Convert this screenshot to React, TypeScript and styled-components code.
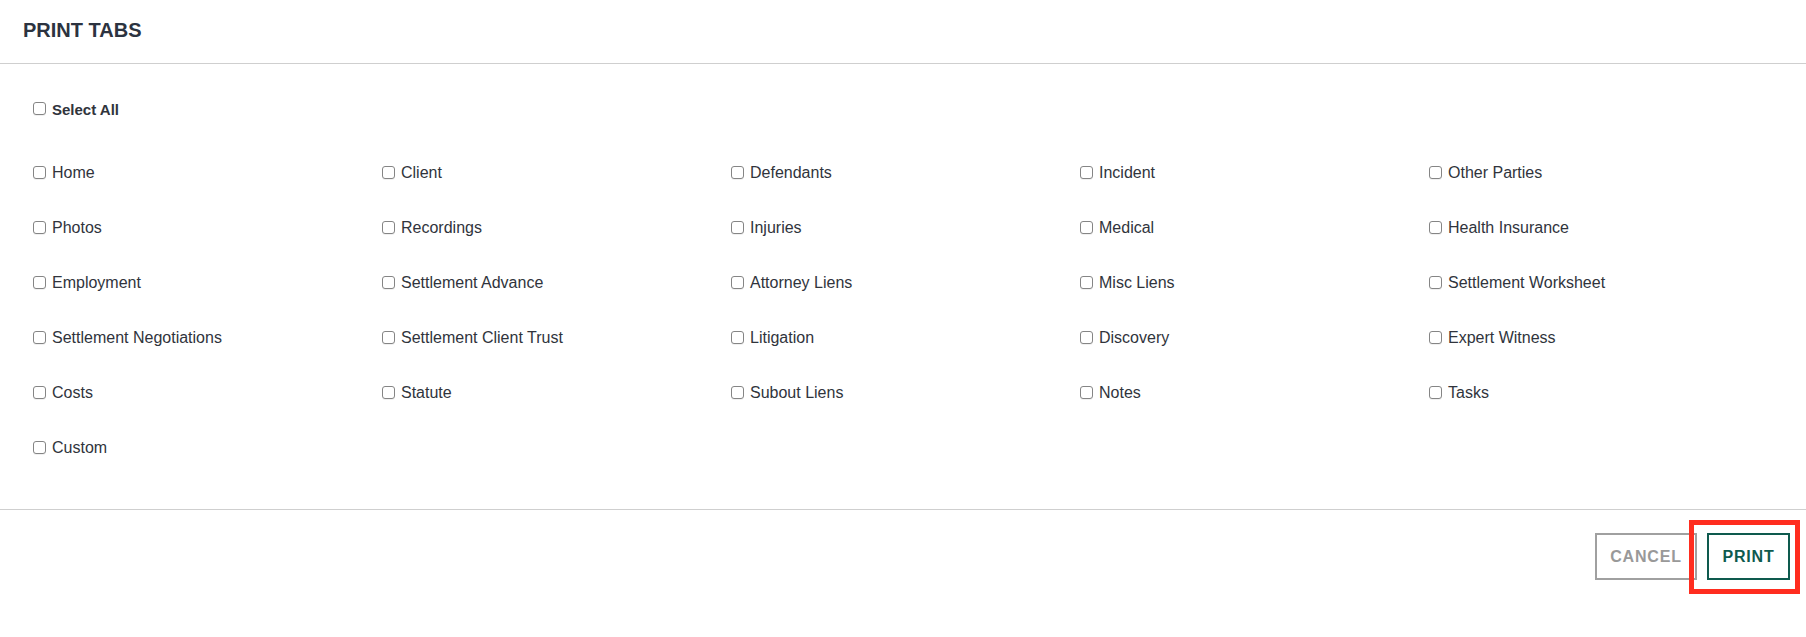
import * as React from 'react';

import styled, { createGlobalStyle } from 'styled-components';

const tabs = [
  'Home', 'Client', 'Defendants', 'Incident', 'Other Parties',
  'Photos', 'Recordings', 'Injuries', 'Medical', 'Health Insurance',
  'Employment', 'Settlement Advance', 'Attorney Liens', 'Misc Liens', 'Settlement Worksheet',
  'Settlement Negotiations', 'Settlement Client Trust', 'Litigation', 'Discovery', 'Expert Witness',
  'Costs', 'Statute', 'Subout Liens', 'Notes', 'Tasks',
  'Custom',
];

const App = (): JSX.Element => {
  const [checked, setChecked] = React.useState<Record<string, boolean>>({});
  const allChecked = tabs.every((t) => checked[t]);

  const toggleAll = () => {
    const next: Record<string, boolean> = {};
    tabs.forEach((t) => (next[t] = !allChecked));
    setChecked(next);
  };

  return (
    <>
      <GlobalStyle />
      <Modal>
        <Header>
          <Title>PRINT TABS</Title>
        </Header>
        <Body>
          <SelectAllRow>
            <Option $bold>
              <Box type="checkbox" checked={allChecked} onChange={toggleAll} />
              Select All
            </Option>
          </SelectAllRow>
          <Grid>
            {tabs.map((tab) => (
              <Option key={tab}>
                <Box
                  type="checkbox"
                  checked={!!checked[tab]}
                  onChange={() => setChecked({ ...checked, [tab]: !checked[tab] })}
                />
                {tab}
              </Option>
            ))}
          </Grid>
        </Body>
        <Footer>
          <Button $variant="cancel">CANCEL</Button>
          <Highlighted>
            <Button $variant="primary">PRINT</Button>
            <Marker />
          </Highlighted>
        </Footer>
      </Modal>
    </>
  );
};

const GlobalStyle = createGlobalStyle`
  html, body {
    margin: 0;
    padding: 0;
    background: #fff;
  }
  body {
    font-family: "Liberation Sans", Arial, sans-serif;
  }
`;

const Modal = styled.div`
  width: 1806px;
  height: 637px;
  background: #fff;
  display: flex;
  flex-direction: column;
`;

const Header = styled.div`
  height: 64px;
  padding: 0 23px;
  display: flex;
  align-items: center;
  border-bottom: 1px solid #cfcfcf;
  box-sizing: border-box;
  padding-bottom: 3px;
`;

const Title = styled.h2`
  margin: 0;
  font-size: 20px;
  font-weight: 700;
  color: #2c3340;
`;

const Body = styled.div`
  padding: 32px 28px 0 33px;
  height: 446px;
  box-sizing: border-box;
  border-bottom: 1px solid #cfcfcf;
`;

const SelectAllRow = styled.div`
  height: 26px;
  display: flex;
  align-items: center;
  margin-bottom: 38px;
`;

const Grid = styled.div`
  display: grid;
  grid-template-columns: repeat(5, 1fr);
  grid-auto-rows: 26px;
  row-gap: 29px;
`;

const Option = styled.label<{ $bold?: boolean }>`
  display: flex;
  align-items: center;
  gap: 6px;
  font-size: ${(p) => (p.$bold ? '15px' : '16px')};
  font-weight: ${(p) => (p.$bold ? 700 : 400)};
  color: #30343c;
  cursor: pointer;
  white-space: nowrap;
`;

const Box = styled.input`
  appearance: none;
  margin: 0;
  width: 13px;
  height: 13px;
  border: 1px solid #858585;
  border-radius: 3px;
  background: #fff;
  box-sizing: border-box;
  box-shadow: 0 1px 0 rgba(0, 0, 0, 0.06);
  flex-shrink: 0;
  position: relative;
  top: -1px;

  &:checked {
    background: #0d5a4d;
    border-color: #0d5a4d;
  }
`;

const Footer = styled.div`
  flex: 1;
  display: flex;
  justify-content: flex-end;
  align-items: flex-start;
  gap: 10px;
  padding: 23px 16px 0 0;
`;

const Button = styled.button<{ $variant: 'cancel' | 'primary' }>`
  height: 47px;
  padding: 0 13px;
  background: #fff;
  border: 2px solid ${(p) => (p.$variant === 'primary' ? '#0e5a4e' : '#a0a0a0')};
  color: ${(p) => (p.$variant === 'primary' ? '#0e5a4e' : '#999999')};
  font-family: "Liberation Sans", Arial, sans-serif;
  font-size: 16px;
  font-weight: 700;
  letter-spacing: 0.8px;
  cursor: pointer;
  width: ${(p) => (p.$variant === 'primary' ? '83px' : '102px')};
`;

const Highlighted = styled.div`
  position: relative;
  display: flex;
`;

const Marker = styled.div`
  position: absolute;
  left: -18px;
  right: -10px;
  top: -13px;
  bottom: -14px;
  border: 5px solid #ff2d1f;
  pointer-events: none;
`;

export default App;
